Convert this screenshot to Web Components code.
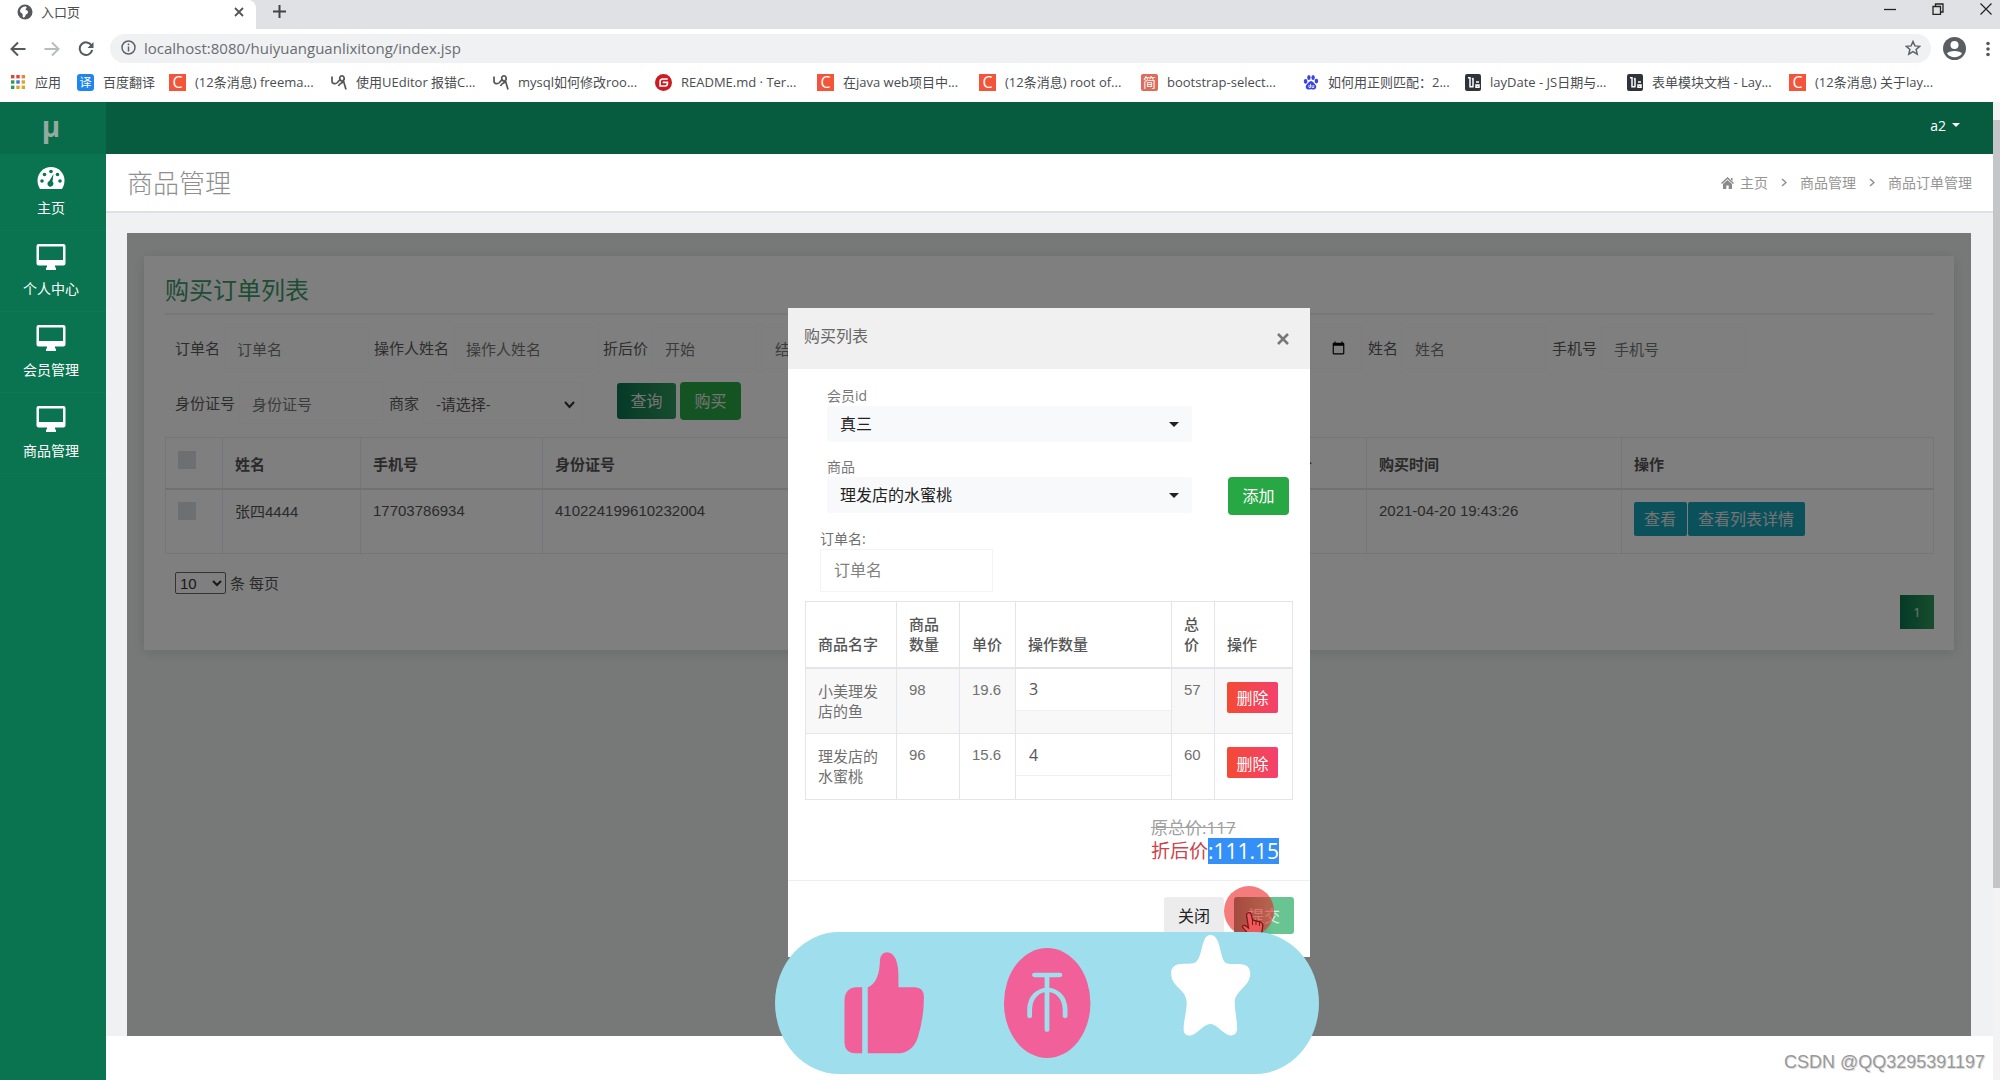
<!DOCTYPE html>
<html lang="zh-CN">
<head>
<meta charset="utf-8">
<title>入口页</title>
<style>
html,body{margin:0;height:100%}
body{font-family:"Open Sans","Noto Sans CJK SC",sans-serif;font-size:15px;line-height:20px;color:#555;background:#fff;overflow:hidden}
</style>
</head>
<body>
<app-shell></app-shell>
<script>
const define = (name, css, html, init) => customElements.define(name, class extends HTMLElement {
  connectedCallback() {
    if (this.shadowRoot) return;
    const root = this.attachShadow({ mode: 'open' });
    root.innerHTML = `<style>*{box-sizing:border-box}${css}</style>${typeof html === 'function' ? html(this) : html}`;
    if (init) init(this, root);
  }
});

/* ---------- browser window ---------- */
const glyphs = {
  apps: '<svg viewBox="0 0 16 16" width="16" height="16"><g><rect x="1" y="1" width="3.4" height="3.4" fill="#d9463a"/><rect x="6.3" y="1" width="3.4" height="3.4" fill="#d9463a"/><rect x="11.6" y="1" width="3.4" height="3.4" fill="#e08a2c"/><rect x="1" y="6.3" width="3.4" height="3.4" fill="#2e9a55"/><rect x="6.3" y="6.3" width="3.4" height="3.4" fill="#3a78d8"/><rect x="11.6" y="6.3" width="3.4" height="3.4" fill="#e0a32c"/><rect x="1" y="11.6" width="3.4" height="3.4" fill="#2e9a55"/><rect x="6.3" y="11.6" width="3.4" height="3.4" fill="#e0a32c"/><rect x="11.6" y="11.6" width="3.4" height="3.4" fill="#e0a32c"/></g></svg>',
  yi: '<span class="sq" style="background:#1f86f0;border-radius:3px;font-size:12px">译</span>',
  c: '<span class="sq" style="background:#f2553a;font-size:16px">C</span>',
  jian: '<span class="sq" style="background:#dd6c5a;border-radius:2px;font-size:13px">简</span>',
  bird: '<svg viewBox="0 0 16 16" width="16" height="16" fill="none" stroke="#555" stroke-width="1.7"><path d="M1 2.500v4.500c0 3 3.500 3.500 5.500 1.500l2.500-3M9 5.500c-1.500-3.500 3-5 4-2s-2.500 5-4 2zM7.500 12c1.500-3.500 4.500-2.500 5-5l2.500 8.500"/></svg>',
  g: '<svg viewBox="0 0 16 16" width="17" height="17"><circle cx="8" cy="8" r="8" fill="#c71d23"/><path d="M12 4.700H7.200A2.400 2.400 0 0 0 4.800 7v4.300h4.800a2.200 2.200 0 0 0 2.100-2.100V7.900H7.300" fill="none" stroke="#fff" stroke-width="1.500"/></svg>',
  paw: '<svg viewBox="0 0 16 16" width="16" height="16" fill="#3a45e0"><ellipse cx="2.600" cy="7.400" rx="1.800" ry="2.400"/><ellipse cx="5.900" cy="3.400" rx="1.700" ry="2.500"/><ellipse cx="10.100" cy="3.400" rx="1.700" ry="2.500"/><ellipse cx="13.400" cy="7.100" rx="1.800" ry="2.400"/><path d="M8 7c2 0 2.800 2.300 4.300 3.600 1.900 1.700.9 4.900-1.500 4.900-1.200 0-1.700-.3-2.800-.3s-1.600.3-2.800.3c-2.400 0-3.400-3.200-1.500-4.900C5.200 9.300 6 7 8 7z"/><path d="M6 11v2.500h1.500V9.800M9 11v2.500h1.800V11" stroke="#fff" stroke-width=".8" fill="none"/></svg>',
  lay: '<svg viewBox="0 0 16 16" width="16" height="17" preserveAspectRatio="none"><rect width="16" height="16" rx="2" fill="#2f333c"/><path d="M3 3.500h2v8.500h3.500M8 4v8M7 5l1.500-1M11 7.500h3M11 10.500h3v2h-3z" stroke="#fff" stroke-width="1.500" fill="none"/></svg>'
};
const marks = [['c','(12条消息) freema...'],['bird','使用UEditor 报错C...'],['bird','mysql如何修改roo...'],['g','README.md · Ter...'],['c','在java web项目中...'],['c','(12条消息) root of...'],['jian','bootstrap-select...'],['paw','如何用正则匹配：2...'],['lay','layDate - JS日期与...'],['lay','表单模块文档 - Lay...'],['c','(12条消息) 关于lay...']];

define('browser-bar', `
:host{display:block;background:#fff;color:#4a4d50;font-size:13px}
button{border:0;background:none;padding:0;display:grid;place-items:center;font:inherit;color:inherit}
.tabs{display:flex;height:29px;background:#dfe1e5}
.tab{width:256px;background:#fff;border-radius:0 8px 0 0;display:flex;align-items:center;gap:8px;padding:0 12px 6px 17px}
.tab b{flex:1;font-weight:400}
.plus{width:46px;padding-bottom:6px}
.win{margin-left:auto;display:flex;gap:32px;padding:0 6px 12px 0}
.win button{width:16px}
.tools{display:flex;height:39px;align-items:center;padding:0 4px 0 10px}
.nav{display:flex;gap:18px;margin-right:16px}
.nav button{width:16px}
.pill{flex:1;height:29px;border-radius:15px;background:#f0f1f3;display:flex;align-items:center;gap:8px;padding:0 10px 2px 11px;min-width:0}
.pill input{flex:1;border:0;background:none;outline:0;font:15px "Open Sans",sans-serif;color:#6a6d70;padding:0}
.who{margin:0 14px 0 12px}
.marks{display:flex;height:34px;padding:0 0 6px 10px;align-items:center}
.marks a{display:flex;align-items:center;color:inherit;text-decoration:none;gap:9px;white-space:nowrap;width:162px}
.marks a:nth-child(1){width:67px}.marks a:nth-child(2){width:92px}
.sq{width:17px;height:17px;color:#fff;display:grid;place-items:center;line-height:17px}
svg{flex:none}
`, () => `
<div class="tabs"><div class="tab"><svg width="16" height="16" viewBox="0 0 16 16"><circle cx="8" cy="8" r="7.500" fill="#55595c"/><path d="M3 6.500C4 3 8 1.800 9.500 3c.6 1.200-1 1.500-1 2.600S11 6 11 8s-1.300 1.500-2 2.500S8 13.500 6.500 13.500 6 11 5.500 10 2.700 8.500 3 6.500z" fill="#fff"/></svg><b>入口页</b><button aria-label="关闭标签"><svg width="10" height="10" viewBox="0 0 10 10" stroke="#555" stroke-width="1.800"><path d="M1 1l8 8M9 1l-8 8"/></svg></button></div>
<button class="plus" aria-label="新标签"><svg width="13" height="13" viewBox="0 0 13 13" stroke="#444" stroke-width="2"><path d="M6.500 0v13M0 6.500h13"/></svg></button>
<div class="win"><button aria-label="最小化"><svg width="12" height="12" stroke="#222" stroke-width="1.300"><path d="M0 6.500h12"/></svg></button><button aria-label="还原"><svg width="12" height="12" fill="none" stroke="#222" stroke-width="1.300"><path d="M1 3.500h7.500v8H1zM3.500 3.500V1H11v8H8.500"/></svg></button><button aria-label="关闭"><svg width="12" height="12" stroke="#222" stroke-width="1.200"><path d="M.5.5l11 11M11.500.5l-11 11"/></svg></button></div></div>
<div class="tools"><div class="nav"><button aria-label="后退"><svg width="16" height="16" fill="none" stroke="#55585c" stroke-width="2"><path d="M15.500 8H2M8 1.500L1.500 8 8 14.500"/></svg></button><button aria-label="前进"><svg width="16" height="16" fill="none" stroke="#b9bbbe" stroke-width="2"><path d="M.5 8H14M8 1.500L14.500 8 8 14.500"/></svg></button><button aria-label="刷新"><svg width="16" height="16" viewBox="0 0 16 16" fill="none" stroke="#55585c" stroke-width="2"><path d="M13.500 4.500A6.300 6.300 0 1 0 14.200 9"/><path d="M15.500 1v6h-6z" fill="#55585c" stroke="none"/></svg></button></div>
<div class="pill"><svg width="15" height="15" fill="none" stroke="#5f6368" stroke-width="1.500"><circle cx="7.500" cy="7.500" r="6.500"/><path d="M7.500 3.500v1.700M7.500 6.500v5"/></svg><input aria-label="地址" value="localhost:8080/huiyuanguanlixitong/index.jsp"><svg width="16" height="16" viewBox="0 0 16 16" fill="none" stroke="#5f6368" stroke-width="1.500"><path d="M8 1.500l1.900 4.400 4.800.4-3.600 3.100 1.100 4.700L8 11.600l-4.200 2.500 1.100-4.700L1.300 6.300l4.800-.4z"/></svg></div>
<button class="who" aria-label="用户"><svg width="23" height="23" viewBox="0 0 23 23"><circle cx="11.500" cy="11.500" r="11.500" fill="#5a5d61"/><circle cx="11.500" cy="8" r="4" fill="#fff"/><path d="M4 16.500c1.500-3.500 13.500-3.500 15 0-3.500 5-11.500 5-15 0z" fill="#fff"/></svg></button><button aria-label="菜单"><svg width="16" height="16" fill="#55585c"><circle cx="8" cy="2.500" r="1.800"/><circle cx="8" cy="8" r="1.800"/><circle cx="8" cy="13.500" r="1.800"/></svg></button></div>
<nav class="marks"><a href="#">${glyphs.apps}应用</a><a href="#">${glyphs.yi}百度翻译</a>${marks.map(([g, t]) => `<a href="#">${glyphs[g]}<span>${t}</span></a>`).join('')}</nav>`);

/* ---------- side navigation ---------- */
define('side-item', `
:host{display:block;border-bottom:1px solid #0d7853}
a{display:flex;flex-direction:column;align-items:center;gap:7px;padding:13px 4px 12px 0;color:#fff;text-decoration:none;font-size:14px;line-height:20px}
svg{display:block}`, el => `<a href="#">${el.getAttribute('icon') === 'gauge'
  ? '<svg width="28" height="24" viewBox="0 0 28 24"><path d="M14 0C6.500 0 .5 6 .5 13.500c0 3 1 6 2.500 8.500h22c1.500-2.500 2.500-5.500 2.500-8.500C27.500 6 21.500 0 14 0z" fill="#fff"/><g fill="#0a7450"><circle cx="5" cy="14" r="1.800"/><circle cx="7.500" cy="7.500" r="1.800"/><circle cx="14" cy="4.500" r="1.800"/><circle cx="20.500" cy="7.500" r="1.800"/><circle cx="23" cy="14" r="1.800"/><path d="M16.500 7l-1 7.500a3 3 0 1 1-3.200-.6z"/></g></svg>'
  : '<svg width="30" height="28" viewBox="0 0 30 28"><path d="M2.500 0h25A2 2 0 0 1 29.500 2v17.500a2 2 0 0 1-2 2H19v2h1V26H10v-2.500h1v-2H2.500a2 2 0 0 1-2-2V2a2 2 0 0 1 2-2zM3 2.500v13.500h24v-13.500z" fill="#fff" fill-rule="evenodd"/></svg>'}<slot></slot></a>`);
define('side-nav', `
:host{display:block;width:106px;background:#0a7450}
.logo{height:52px;background:#086c4a;display:grid;place-items:center;padding:0 4px 4px 0;color:#93aaa0;font:700 28px/48px "Open Sans",sans-serif}`,
`<div class="logo">µ</div><nav><side-item icon="gauge">主页</side-item><side-item>个人中心</side-item><side-item>会员管理</side-item><side-item>商品管理</side-item></nav>`);

/* ---------- page heads ---------- */
define('top-bar', `
:host{display:flex;justify-content:flex-end;height:52px;background:#075c40;padding:0 33px 6px 0;align-items:center}
button{border:0;background:none;padding:0;color:#fff;font:14px "Open Sans",sans-serif;display:flex;align-items:center;gap:6px}
i{border:4px solid transparent;border-top-color:#fff;border-bottom:0}`, `<button>a2 <i></i></button>`);
define('title-bar', `
:host{display:flex;justify-content:space-between;align-items:center;height:59px;padding:0 21px;background:#fff;border-bottom:2px solid #dfe1e4;color:#8f8f8f}
h1{margin:0;font-weight:300;font-size:26px;line-height:40px;color:#8f8f8f}
nav{display:flex;align-items:center;gap:13px;font-size:14px}
a{color:#959595;text-decoration:none;display:flex;align-items:center;gap:6px}
.p{width:6px;height:9px;fill:none;stroke:#8f8f8f;stroke-width:1.500}`,
`<h1>商品管理</h1><nav><a href="#"><svg width="13" height="12" viewBox="0 0 13 12" fill="#8a8a8a"><path d="M6.500 0L13 6l-1 1-5.500-5L1 7 0 6zM10 1h1.500v3L10 2.700zM6.500 3L11 7v5H7.700V8.500H5.300V12H2V7z"/></svg>主页</a><svg class="p"><path d="M1 1l4 3.500L1 8"/></svg><a href="#">商品管理</a><svg class="p"><path d="M1 1l4 3.500L1 8"/></svg><a href="#">商品订单管理</a></nav>`);

/* ---------- labelled search field ---------- */
define('search-field', `
:host{display:flex;align-items:center;gap:4px;white-space:nowrap;flex:none;color:#5a5a5a}
input,select{height:42px;width:145px;border:1px solid #fafafa;padding:2px 12px 0;background:#fff;font:inherit;color:#555;border-radius:2px;outline:0}
input::placeholder{color:#777}
input[type=date]{width:211px;padding:0 14px}
.short{width:105px}
.inputs{display:flex;gap:5px}
.sel{position:relative;display:flex}
select{width:160px;appearance:none}
.sel svg{position:absolute;right:8px;top:19px}`, el => {
  const kind = el.getAttribute('kind'), label = el.getAttribute('label');
  const body = kind === 'range' ? `<input id="f" class="short" placeholder="开始"><input class="short" aria-label="结束" placeholder="结束">`
    : kind === 'dates' ? `<input id="f" type="date"><input type="date" aria-label="结束日期">`
    : kind === 'select' ? `<span class="sel"><select id="f"><option>-请选择-</option></select><svg width="11" height="8" fill="none" stroke="#333" stroke-width="2"><path d="M1 1l4.500 5L10 1"/></svg></span>`
    : `<input id="f" placeholder="${label}">`;
  return `<label for="f">${label}</label><span class="inputs">${body}</span>`;
});

/* ---------- order list ---------- */
define('order-card', `
:host{display:block;background:#fff;padding:20px 20px 21px 21px;box-shadow:0 2px 12px rgba(0,0,0,.12);color:#555}
h2{margin:0;font-weight:400;font-size:24px;line-height:28px;color:#3a9a68}
hr{border:0;border-top:2px solid #f0f0f0;margin:9px 0 12px}
.row{display:flex;gap:5px;padding-left:10px;margin-bottom:13px;height:42px;align-items:center}
.row+.row{margin-bottom:13px}
button{border:0;color:#e8e8e8;font:inherit;font-size:16px;padding:0}
.find{width:59px;height:36px;margin:0 -1px 5px 29px;border-radius:3px;background:linear-gradient(90deg,#0a7450,#2f9a5c)}
.buy{width:61px;height:38px;margin-bottom:5px;border-radius:4px;background:#28a745}
table{width:100%;border-collapse:collapse;table-layout:fixed}
th,td{border:1px solid #e9ecef;text-align:left;vertical-align:top;padding:12px 0 0 12px}
th{height:51px;border-bottom:2px solid #e0e3e6;padding-top:16px;font-weight:700}
td{height:65px;font-family:"Liberation Sans","Noto Sans CJK SC",sans-serif}
.n{padding-top:11px}
input{appearance:none;margin:0;width:18px;height:18px;background:#dcdfe2;display:block}
th input{margin-top:-3px}
.act{display:flex;gap:1px}
.act button{background:#17a2b8;height:34px;padding:0 11px 0 10px;border-radius:2px;font-family:"Open Sans","Noto Sans CJK SC",sans-serif}
.pager{display:flex;justify-content:space-between;padding-left:10px;margin-top:18px}
.pager label{display:flex;gap:4px;height:22px;align-items:center}
select{width:51px;height:22px;font:15px "Liberation Sans",sans-serif;padding:0;border:1px solid #666;border-radius:2px;background:#fff;color:#333}
.pager button{width:34px;height:34px;margin-top:23px;font-size:13px;background:linear-gradient(90deg,#0a7450,#2f9a5c)}`,
`<h2>购买订单列表</h2><hr>
<div class="row"><search-field label="订单名"></search-field><search-field label="操作人姓名"></search-field><search-field label="折后价" kind="range"></search-field><search-field label="购买时间" kind="dates"></search-field><search-field label="姓名"></search-field><search-field label="手机号"></search-field></div>
<div class="row"><search-field label="身份证号"></search-field><search-field label="商家" kind="select"></search-field><button class="find">查询</button><button class="buy">购买</button></div>
<table><colgroup><col style="width:57px"><col style="width:138px"><col style="width:182px"><col><col style="width:112px"><col style="width:255px"><col style="width:312px"></colgroup>
<thead><tr><th><input type="checkbox" aria-label="全选"></th><th>姓名</th><th>手机号</th><th>身份证号</th><th>折后价</th><th>购买时间</th><th>操作</th></tr></thead>
<tbody><tr><td><input type="checkbox" aria-label="选择"></td><td>张四4444</td><td class="n">17703786934</td><td class="n">410224199610232004</td><td></td><td class="n">2021-04-20 19:43:26</td><td><div class="act"><button>查看</button><button>查看列表详情</button></div></td></tr></tbody></table>
<div class="pager"><label><select><option>10</option></select>条 每页</label><button>1</button></div>`);

/* ---------- purchase dialog ---------- */
define('pick-list', `
:host{display:block;flex:1}
label{display:block;font-size:14px;line-height:20px;color:#777}
.b{position:relative}
select{appearance:none;width:100%;height:36px;border:0;border-radius:2px;background:#f8f9fa;padding:0 13px;font:inherit;font-size:16px;color:#222;display:block}
i{position:absolute;right:13px;top:16px;border:5px solid transparent;border-top-color:#222;border-bottom:0}`,
el => `<label for="s">${el.getAttribute('label')}</label><div class="b"><select id="s"><option>${el.textContent}</option></select><i></i></div>`);

const line = (name, stock, price, n, sum) => `<tr><td>${name}</td><td class="n">${stock}</td><td class="n">${price}</td><td class="q"><input type="text" aria-label="操作数量" value="${n}"></td><td class="n">${sum}</td><td><button class="del">删除</button></td></tr>`;
define('buy-dialog', `
:host{display:block;background:#fff;color:#707070}
button{border:0;font:inherit;font-size:16px;padding:0}
header{display:flex;justify-content:space-between;align-items:center;height:61px;background:#f0f0f0;padding:0 21px 6px 16px}
h3{margin:0;font-weight:400;font-size:16px;color:#666}
header button{background:none;padding:6px 0 0}
.body{padding:17px 17px 16px}
.r{display:flex;margin:0 101px 15px 22px}
.r.two{margin:0 4px 16px 22px;align-items:flex-end}
.add{margin-left:36px;width:61px;height:38px;border-radius:4px;background:#28a745;color:#fff;margin-bottom:-2px}
.name{margin:0 0 9px 15px;display:flex;flex-direction:column;width:173px;font-size:14px}
.name input{height:43px;border:1px solid #f4f4f4;padding:0 13px 2px;font:inherit;font-size:16px;outline:0}
.name input::placeholder{color:#808080}
table{width:100%;border-collapse:collapse;table-layout:fixed;font-family:"Liberation Sans","Noto Sans CJK SC",sans-serif}
th,td{border:1px solid #e3e5e8;text-align:left;vertical-align:top;padding:13px 4px 0 12px;font-weight:400}
th{height:66px;border-bottom:2px solid #e3e5e8;vertical-align:bottom;padding:0 4px 12px 12px;font-weight:500;color:#555}
td{height:66px}
td.n{padding-top:11px}
tbody tr:first-child{background:#f8f8f8}
td.q{padding:0}
.q input{display:block;width:100%;height:42px;border:0;border-bottom:1px solid #f0f0f0;background:#fff;padding:0 13px;font:16px "Open Sans",sans-serif;color:#555;outline:0}
.del{width:51px;height:31px;border-radius:2px;background:linear-gradient(90deg,#f44a33,#f4406e);color:#fff;font-family:"Noto Sans CJK SC",sans-serif}
.sum{width:142px;margin:18px 0 0 auto;white-space:nowrap}
.sum s{display:block;font-size:17px;line-height:20px;color:#a0a0a0}
.sum p{margin:0;font-size:19px;line-height:26px;color:#cc444b;display:flex}
.sum mark{background:#3490f7;color:#fff;font-size:21px}
footer{border-top:1px solid #eee;display:flex;justify-content:flex-end;gap:10px;padding:16px 16px 23px;height:77px}
.no{width:60px;background:#ececec;color:#222;border-radius:3px}
.ok{width:60px;border-radius:3px;color:#d8f0e2;background:linear-gradient(90deg,#398266,#68c592 65%)}`,
`<header><h3>购买列表</h3><button aria-label="关闭"><svg width="12" height="12" stroke="#777" stroke-width="2.500"><path d="M1 1l10 10M11 1L1 11"/></svg></button></header>
<div class="body">
<div class="r"><pick-list label="会员id">真三</pick-list></div>
<div class="r two"><pick-list label="商品">理发店的水蜜桃</pick-list><button class="add">添加</button></div>
<label class="name">订单名:<input placeholder="订单名"></label>
<table><colgroup><col style="width:91px"><col style="width:63px"><col style="width:56px"><col><col style="width:43px"><col style="width:78px"></colgroup>
<thead><tr><th>商品名字</th><th>商品<br>数量</th><th>单价</th><th>操作数量</th><th>总<br>价</th><th>操作</th></tr></thead>
<tbody>${line('小美理发<br>店的鱼', 98, 19.6, 3, 57)}${line('理发店的<br>水蜜桃', 96, 15.6, 4, 60)}</tbody></table>
<div class="sum"><s>原总价:117</s><p>折后价<mark>:111.15</mark></p></div>
</div>
<footer><button class="no">关闭</button><button class="ok">提交</button></footer>`);

/* ---------- video overlays ---------- */
define('click-spot', `
:host{position:absolute;width:50px;height:50px;border-radius:50%;background:rgba(237,37,37,.6)}
svg{position:absolute;left:17px;top:25px}`,
`<svg width="24" height="28" viewBox="0 0 24 28"><path d="M7 2c1.500-1 3 0 3.300 1.500L11.500 9l8 2c2 .6 2.500 2 2.300 4l-1 6-2 6H9.500C8 22 3 19 1.500 16c0-2 2.500-2 3.500-1l2.500 2L5.500 4C5.400 3 6 2.300 7 2z" fill="#ee5a5a" stroke="#7c1518" stroke-width="1.300"/><path d="M11.500 9v5M15 10v4M18.500 11v4" stroke="#7c1518"/></svg>`);
define('like-bar', `
:host{position:absolute;left:775px;bottom:6px;width:544px;height:142px;background:#9fdeed;border-radius:64px/71px}
svg{display:block;width:100%;height:100%}`,
`<svg viewBox="39 126 1472 426" preserveAspectRatio="none"><g fill="#f26099">
<path d="M275 292h-18q-30 4-30 42v120q0 36 30 36h18z"/>
<path d="M290 292q32-14 33-82 3-23 19-23 31 2 31 75v30h44q25 0 25 30 0 60-16 118-14 50-58 50h-78z"/>
<ellipse cx="775.500" cy="339" rx="117" ry="165"/></g>
<g fill="none" stroke="#9fdeed" stroke-width="13" stroke-linecap="round"><path d="M741 255h69M775 258v161M728 378v-20c2-78 94-78 96 0v20"/></g>
<path d="M1217 135c30 0 24 70 42 84 16 10 66-12 66 32-1 40-42 50-42 86 0 30 8 58 6 84-2 16-16 20-30 10-18-12-28-29-42-29s-25 17-42 29c-14 10-28 6-30-8-2-24 8-56 8-86 0-40-42-46-42-86 0-44 50-22 66-34 20-14 14-82 40-82z" fill="#fff"/></svg>`);

/* ---------- whole page ---------- */
define('app-shell', `
:host{position:relative;display:flex;flex-direction:column;height:100vh;overflow:hidden}
.page{display:flex;flex:1;min-height:0}
main{flex:1;display:flex;flex-direction:column;min-width:0;background:#eff1f3}
.panel{position:relative;flex:1;margin:20px 22px 0 21px;background:#eff2f2;padding:23px 17px}
.shade{position:absolute;inset:0;background:rgba(0,0,0,.5)}
buy-dialog{position:absolute;top:75px;left:calc(50% - 261px);width:522px}
click-spot{left:1224px;top:886px}
.foot{background:#fff;height:44px;display:flex;align-items:center;justify-content:flex-end;padding:8px 8px 0 0;font:18px/36px "Liberation Sans",sans-serif;color:#999;text-shadow:1px 1px 0 #ddd}
.bar{width:7px;background:#f3f3f3;padding-top:18px}
.bar div{height:771px;max-height:80%;background:#c4c5c7}`,
`<browser-bar></browser-bar>
<div class="page"><side-nav></side-nav>
<main><top-bar></top-bar><title-bar></title-bar>
<div class="panel"><order-card></order-card><div class="shade"></div><buy-dialog></buy-dialog></div>
<div class="foot">CSDN @QQ3295391197</div></main>
<div class="bar"><div></div></div></div>
<click-spot></click-spot><like-bar></like-bar>`);
</script>
</body>
</html>
